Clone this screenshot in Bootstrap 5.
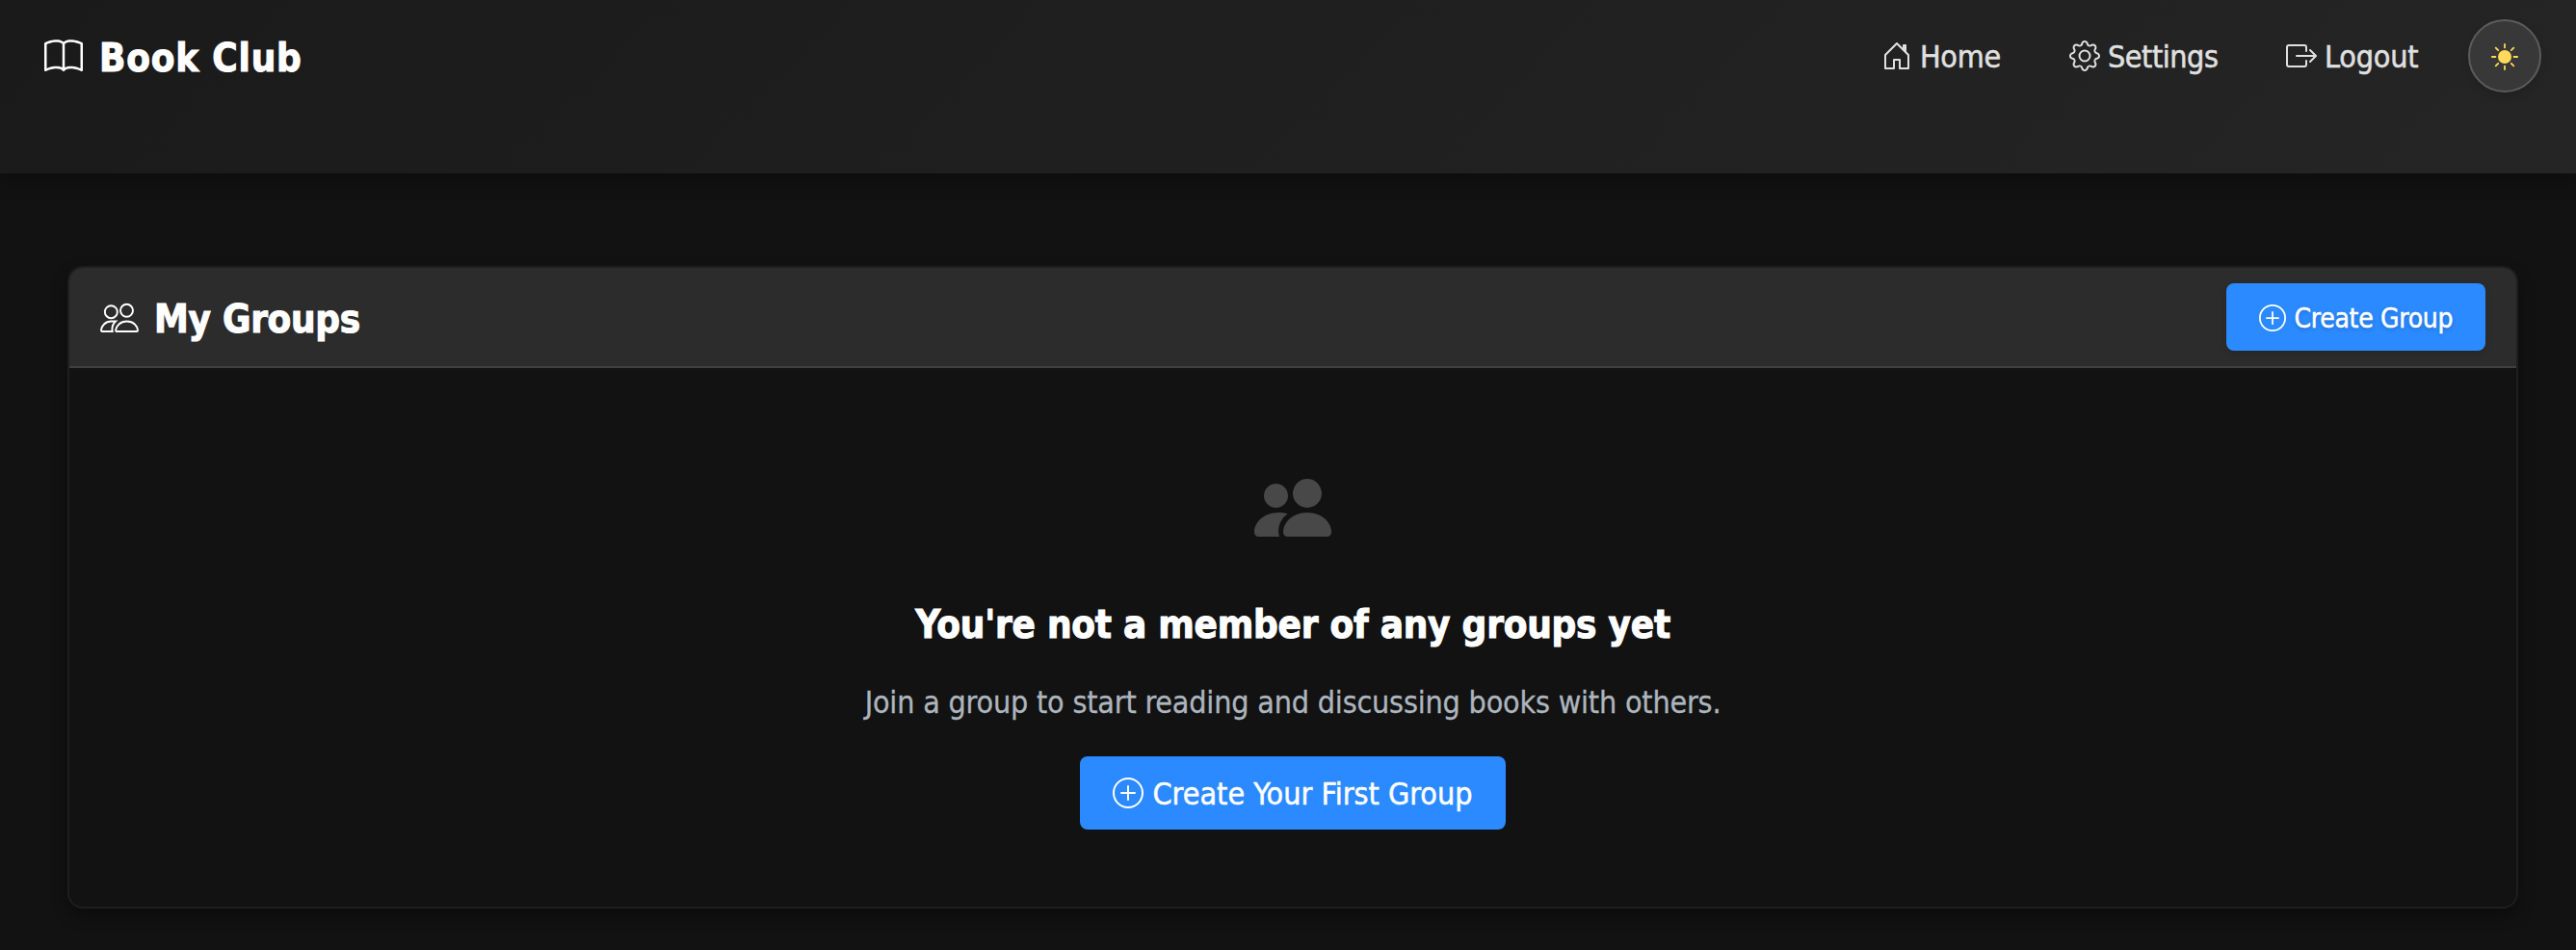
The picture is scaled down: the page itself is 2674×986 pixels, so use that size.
<!DOCTYPE html>
<html lang="en" data-bs-theme="dark">
<head>
<meta charset="utf-8">
<meta name="viewport" content="width=device-width, initial-scale=1">
<title>Book Club</title>
<link href="https://cdn.jsdelivr.net/npm/bootstrap@5.3.0/dist/css/bootstrap.min.css" rel="stylesheet">
<style>
body{background:#121212;font-family:"DejaVu Sans Condensed","DejaVu Sans",sans-serif;font-stretch:condensed;font-size:32px;line-height:48px;min-height:986px}
svg{fill:currentColor;flex:none;display:block}
.site-bar{height:180px;background:linear-gradient(135deg,#1a1a1a,#252525);box-shadow:0 4px 20px rgba(0,0,0,.4);padding:20px 36px 0 46px}
.brand-link{height:76px;color:#fff;gap:17px;padding-top:2px}
.brand-text{font-size:40px;font-weight:700;letter-spacing:.8px;padding-top:2px}
.brand-text,.group-head h2 span,.empty-title{-webkit-text-stroke:1px}
.bar-links{height:76px;gap:70px}
.bar-links a{color:#e0e0e0;gap:8px}
.bar-links span{padding-top:2px;-webkit-text-stroke:.5px}
.link-home{width:125px;letter-spacing:-.3px}
.link-settings{width:155px;letter-spacing:-.45px}
.link-logout{width:138px;letter-spacing:-.2px}
.theme-btn{width:76px;height:76px;margin-left:-19px;padding:2px 0 0;background:#383838;border:2px solid #5c5c5c;color:#ffd95a;box-shadow:0 4px 8px rgba(0,0,0,.12)}
.page-main{padding:96px 60px 0 70px}
.group-card{height:667px;background:#121212;border:2px solid #1e1e1e;border-radius:16px;box-shadow:0 8px 16px rgba(0,0,0,.35)}
.group-head{height:104px;background:#2c2c2c;border-bottom:2px solid #404040;border-radius:14px 14px 0 0;padding:0 32px}
.group-head h2,.empty-title{font-size:40px;font-weight:700;color:#fff;line-height:48px}
.group-head h2{gap:16px;letter-spacing:-.3px}
.group-head h2 span{padding-top:4px}
.blue-btn{background:#2b8aff;color:#fff;border:0;border-radius:8px;line-height:1;padding:0 0 0 34px}
.blue-btn:hover{background:#1f7af0;color:#fff}
.btn-top{width:269px;height:70px;font-size:28px;gap:8.5px;letter-spacing:-.3px;padding-top:2px;box-shadow:0 3px 6px rgba(0,0,0,.12);text-shadow:0 2px 4px rgba(0,0,0,.2)}
.btn-top span{padding-top:1px}
.btn-first{width:442px;height:76px;font-size:32px;gap:9.5px}
.btn-first span{padding-top:2px}
.blue-btn span{-webkit-text-stroke:.5px}
.empty-icon{color:#484848;margin:115px 0 67px}
.empty-title{letter-spacing:-.24px;margin-bottom:33px}
.empty-copy{color:#adb5bd;letter-spacing:-.2px;margin-bottom:32px;-webkit-text-stroke:.3px}
</style>
</head>
<body>
<nav class="site-bar d-flex justify-content-between align-items-start">
  <a href="#" class="brand-link d-flex align-items-center text-decoration-none">
    <svg width="40" height="40" viewBox="0 0 16 16"><path d="M1 2.828c.885-.37 2.154-.769 3.388-.893 1.33-.134 2.458.063 3.112.752v9.746c-.935-.53-2.12-.603-3.213-.493-1.18.12-2.37.461-3.287.811V2.828zm7.5-.141c.654-.689 1.782-.886 3.112-.752 1.234.124 2.503.523 3.388.893v9.923c-.918-.35-2.107-.692-3.287-.81-1.094-.111-2.278-.039-3.213.492V2.687zM8 1.783C7.015.936 5.587.81 4.287.94c-1.514.153-3.042.672-3.994 1.105A.5.5 0 0 0 0 2.5v11a.5.5 0 0 0 .707.455c.882-.4 2.303-.881 3.68-1.02 1.409-.142 2.59.087 3.223.877a.5.5 0 0 0 .78 0c.633-.79 1.814-1.019 3.222-.877 1.378.139 2.8.62 3.681 1.02A.5.5 0 0 0 16 13.5v-11a.5.5 0 0 0-.293-.455c-.952-.433-2.48-.952-3.994-1.105C10.413.809 8.985.936 8 1.783z"/></svg>
    <span class="brand-text">Book Club</span>
  </a>
  <div class="bar-links d-flex align-items-center text-nowrap">
    <a href="#" class="link-home d-flex align-items-center text-decoration-none"><svg width="32" height="32" viewBox="0 0 16 16"><path d="M8.354 1.146a.5.5 0 0 0-.708 0l-6 6A.5.5 0 0 0 1.5 7.5v7a.5.5 0 0 0 .5.5h4.5a.5.5 0 0 0 .5-.5v-4h2v4a.5.5 0 0 0 .5.5H14a.5.5 0 0 0 .5-.5v-7a.5.5 0 0 0-.146-.354L13 5.793V2.5a.5.5 0 0 0-.5-.5h-1a.5.5 0 0 0-.5.5v1.293L8.354 1.146zM2.5 14V7.707l5.5-5.5 5.5 5.5V14H10v-4a.5.5 0 0 0-.5-.5h-3a.5.5 0 0 0-.5.5v4H2.5z"/></svg><span>Home</span></a>
    <a href="#" class="link-settings d-flex align-items-center text-decoration-none"><svg width="32" height="32" viewBox="0 0 16 16"><path d="M8 4.754a3.246 3.246 0 1 0 0 6.492 3.246 3.246 0 0 0 0-6.492zM5.754 8a2.246 2.246 0 1 1 4.492 0 2.246 2.246 0 0 1-4.492 0z"/><path d="M9.796 1.343c-.527-1.79-3.065-1.79-3.592 0l-.094.319a.873.873 0 0 1-1.255.52l-.292-.16c-1.64-.892-3.433.902-2.54 2.541l.159.292a.873.873 0 0 1-.52 1.255l-.319.094c-1.79.527-1.79 3.065 0 3.592l.319.094a.873.873 0 0 1 .52 1.255l-.16.292c-.892 1.64.901 3.434 2.541 2.54l.292-.159a.873.873 0 0 1 1.255.52l.094.319c.527 1.79 3.065 1.79 3.592 0l.094-.319a.873.873 0 0 1 1.255-.52l.292.16c1.64.893 3.434-.902 2.54-2.541l-.159-.292a.873.873 0 0 1 .52-1.255l.319-.094c1.79-.527 1.79-3.065 0-3.592l-.319-.094a.873.873 0 0 1-.52-1.255l.16-.292c.893-1.64-.902-3.433-2.541-2.54l-.292.159a.873.873 0 0 1-1.255-.52l-.094-.319zm-2.633.283c.246-.835 1.428-.835 1.674 0l.094.319a1.873 1.873 0 0 0 2.693 1.115l.291-.16c.764-.415 1.6.42 1.184 1.185l-.159.292a1.873 1.873 0 0 0 1.116 2.692l.318.094c.835.246.835 1.428 0 1.674l-.319.094a1.873 1.873 0 0 0-1.115 2.693l.16.291c.415.764-.42 1.6-1.185 1.184l-.291-.159a1.873 1.873 0 0 0-2.693 1.116l-.094.318c-.246.835-1.428.835-1.674 0l-.094-.319a1.873 1.873 0 0 0-2.692-1.115l-.292.16c-.764.415-1.6-.42-1.184-1.185l.159-.291A1.873 1.873 0 0 0 1.945 8.93l-.319-.094c-.835-.246-.835-1.428 0-1.674l.319-.094A1.873 1.873 0 0 0 3.06 4.377l-.16-.292c-.415-.764.42-1.6 1.185-1.184l.292.159a1.873 1.873 0 0 0 2.692-1.115l.094-.319z"/></svg><span>Settings</span></a>
    <a href="#" class="link-logout d-flex align-items-center text-decoration-none"><svg width="32" height="32" viewBox="0 0 16 16"><path d="M10 12.5a.5.5 0 0 1-.5.5h-8a.5.5 0 0 1-.5-.5v-9a.5.5 0 0 1 .5-.5h8a.5.5 0 0 1 .5.5v2a.5.5 0 0 0 1 0v-2A1.5 1.5 0 0 0 9.5 2h-8A1.5 1.5 0 0 0 0 3.5v9A1.5 1.5 0 0 0 1.5 14h8a1.5 1.5 0 0 0 1.5-1.5v-2a.5.5 0 0 0-1 0v2z"/><path d="M15.854 8.354a.5.5 0 0 0 0-.708l-3-3a.5.5 0 0 0-.708.708L14.293 7.5H5.5a.5.5 0 0 0 0 1h8.793l-2.147 2.146a.5.5 0 0 0 .708.708l3-3z"/></svg><span>Logout</span></a>
    <button type="button" aria-label="Toggle theme" class="theme-btn rounded-circle d-flex align-items-center justify-content-center">
      <svg width="28" height="28" viewBox="-14 -14 28 28"><circle r="7"/><path d="M0-13.1v3.5M0 13.1V9.6M-13.1 0h3.5M13.1 0H9.6M-9.3-9.3l2.5 2.5M9.3-9.3 6.8-6.8M-9.3 9.3l2.5-2.5M9.3 9.3 6.8 6.8" stroke="currentColor" stroke-width="1.8" stroke-linecap="round"/></svg>
    </button>
  </div>
</nav>
<main class="page-main">
  <section class="group-card">
    <div class="group-head d-flex align-items-center justify-content-between">
      <h2 class="d-flex align-items-center mb-0">
        <svg width="40" height="32" viewBox="0 -6 120 96"><g fill="none" stroke="currentColor" stroke-width="5.8"><circle cx="34" cy="26" r="19.5"/><circle cx="82.5" cy="22" r="19.5"/><path d="M53 87Q48 87 48.5 83C50 70 62 55.5 83 55.5S116 70 117 83Q117.5 87 113 87Z"/><path d="M38 87H7Q2.5 87 3 83C4 70 16 55.5 34 55.5H48C39 64 36 76 38 87Z"/></g></svg>
        <span>My Groups</span>
      </h2>
      <button type="button" class="btn blue-btn btn-top d-flex align-items-center text-nowrap"><svg width="28" height="28" viewBox="0 0 16 16"><path d="M8 15A7 7 0 1 1 8 1a7 7 0 0 1 0 14zm0 1A8 8 0 1 0 8 0a8 8 0 0 0 0 16z"/><path d="M8 4a.5.5 0 0 1 .5.5v3h3a.5.5 0 0 1 0 1h-3v3a.5.5 0 0 1-1 0v-3h-3a.5.5 0 0 1 0-1h3v-3A.5.5 0 0 1 8 4z"/></svg><span>Create Group</span></button>
    </div>
    <div class="d-flex flex-column align-items-center text-center">
      <svg class="empty-icon" width="80" height="60" viewBox="0 0 240 180"><circle cx="67.5" cy="52.5" r="37.5"/><circle cx="165" cy="45" r="45"/><path d="M105 180Q90 180 90 165C90 140 115 105 165 105S240 140 240 165Q240 180 225 180Z"/><path d="M78 180C70 155 80 125 104 109C95 106 85 105 75 105C25 105 0 140 0 165Q0 180 15 180Z"/></svg>
      <h3 class="empty-title">You're not a member of any groups yet</h3>
      <p class="empty-copy">Join a group to start reading and discussing books with others.</p>
      <button type="button" class="btn blue-btn btn-first d-flex align-items-center text-nowrap"><svg width="32" height="32" viewBox="0 0 16 16"><path d="M8 15A7 7 0 1 1 8 1a7 7 0 0 1 0 14zm0 1A8 8 0 1 0 8 0a8 8 0 0 0 0 16z"/><path d="M8 4a.5.5 0 0 1 .5.5v3h3a.5.5 0 0 1 0 1h-3v3a.5.5 0 0 1-1 0v-3h-3a.5.5 0 0 1 0-1h3v-3A.5.5 0 0 1 8 4z"/></svg><span>Create Your First Group</span></button>
    </div>
  </section>
</main>
<script src="https://cdn.jsdelivr.net/npm/bootstrap@5.3.0/dist/js/bootstrap.bundle.min.js"></script>
</body>
</html>
